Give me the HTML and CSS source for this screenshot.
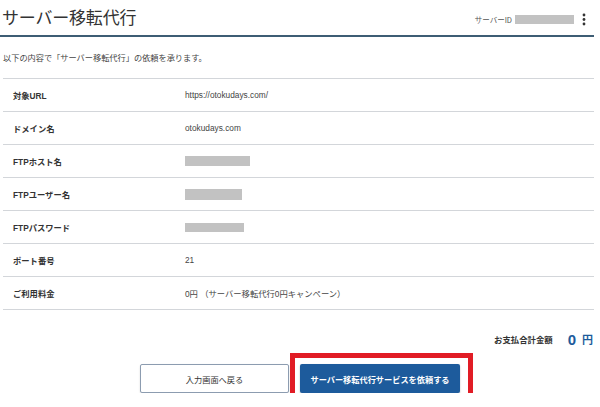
FILE: index.html
```html
<!DOCTYPE html>
<html lang="ja">
<head>
<meta charset="utf-8">
<title>サーバー移転代行</title>
<link rel="stylesheet" href="styles.css">
</head>
<body>
<div class="page">
  <header class="header">
    <h1 class="title">サーバー移転代行</h1>
    <div class="server">
      <span class="server-label">サーバーID</span>
      <span class="mask mask-id"></span>
      <svg class="kebab" width="6" height="14" viewBox="0 0 6 14"><circle cx="3" cy="2" r="1.4"/><circle cx="3" cy="6.5" r="1.4"/><circle cx="3" cy="11" r="1.4"/></svg>
    </div>
  </header>
  <p class="intro">以下の内容で「サーバー移転代行」の依頼を承ります。</p>
  <div class="table">
    <div class="row"><div class="label">対象URL</div><div class="value">https://otokudays.com/</div></div>
    <div class="row"><div class="label">ドメイン名</div><div class="value">otokudays.com</div></div>
    <div class="row"><div class="label">FTPホスト名</div><div class="value"><span class="mask mask-host"></span></div></div>
    <div class="row"><div class="label">FTPユーザー名</div><div class="value"><span class="mask mask-user"></span></div></div>
    <div class="row"><div class="label">FTPパスワード</div><div class="value"><span class="mask mask-pass"></span></div></div>
    <div class="row"><div class="label">ポート番号</div><div class="value">21</div></div>
    <div class="row"><div class="label">ご利用料金</div><div class="value">0円 （サーバー移転代行0円キャンペーン）</div></div>
  </div>
  <div class="total">
    <span class="total-label">お支払合計金額</span>
    <span class="total-num">0</span>
    <span class="total-unit">円</span>
  </div>
  <div class="actions">
    <button class="btn btn-back">入力画面へ戻る</button>
    <div class="primary-wrap">
      <button class="btn btn-primary">サーバー移転代行サービスを依頼する</button>
      <span class="highlight"></span>
    </div>
  </div>
</div>
</body>
</html>
```

FILE: styles.css
```css
* { box-sizing: border-box; }
html, body { margin: 0; padding: 0; background: #fff; }
body {
  font-family: "Liberation Sans", "Noto Sans CJK JP", sans-serif;
  color: #333;
}
.page { width: 594px; }
.header {
  height: 37px;
  border-bottom: 2px solid #3e5d74;
  display: flex;
  align-items: center;
  justify-content: space-between;
}
.title {
  margin: 0 0 0 2px;
  font-family: "Noto Sans CJK JP", sans-serif;
  font-weight: 400;
  font-size: 17px;
  line-height: 20px;
  color: #333;
  letter-spacing: -0.2px;
  position: relative;
  top: -1px;
}
.server {
  display: flex;
  align-items: center;
  margin-top: 4px;
}
.server-label {
  font-family: "Noto Sans CJK JP", sans-serif;
  font-size: 7.5px;
  color: #555;
  margin-right: 3px;
}
.mask { display: inline-block; background: #c2c2c2; vertical-align: middle; }
.mask-id { width: 59px; height: 9px; }
.kebab { fill: #333; margin-left: 7px; margin-right: 7px; }
.intro {
  margin: 0;
  padding: 14px 0 15px 3px;
  font-family: "Noto Sans CJK JP", sans-serif;
  font-size: 8.2px;
  line-height: 12px;
  color: #444;
}
.table { margin-left: 3px; border-top: 1px solid #d3d6da; }
.row {
  display: flex;
  align-items: center;
  height: 33px;
  border-bottom: 1px solid #d3d6da;
  font-size: 8.3px;
}
.label {
  width: 182px;
  padding-left: 10px;
  font-weight: bold;
  color: #333;
}
.value { color: #444; }
.mask-host { width: 65px; height: 10px; }
.mask-user { width: 57px; height: 11px; }
.mask-pass { width: 59px; height: 9px; }
.total {
  margin-top: 20px;
  height: 18px;
  display: flex;
  justify-content: flex-end;
  align-items: center;
}
.total-label {
  font-size: 8.4px;
  font-weight: bold;
  color: #333;
  margin-right: 15px;
}
.total-num {
  font-size: 15px;
  font-weight: bold;
  color: #1d5b9c;
  margin-right: 6px;
}
.total-unit {
  font-size: 11px;
  font-weight: bold;
  color: #1d5b9c;
  margin-right: 1px;
}
.actions {
  margin-top: 16px;
  display: flex;
  justify-content: center;
  gap: 11px;
  padding-left: 6px;
}
.btn {
  height: 29px;
  font-family: "Noto Sans CJK JP", sans-serif;
  font-size: 8.2px;
  padding: 0;
  border-radius: 2px;
}
.btn-back {
  width: 149px;
  background: #fff;
  color: #333;
  border: 1px solid #8c9cb0;
  box-shadow: 0 1px 2px rgba(0,0,0,0.15);
}
.primary-wrap { position: relative; }
.btn-primary {
  width: 160px;
  background: #1d5b9c;
  color: #fff;
  font-weight: bold;
  border: none;
  box-shadow: 0 1px 2px rgba(0,0,0,0.25);
}
.highlight {
  position: absolute;
  left: -10px;
  right: -13px;
  top: -11px;
  bottom: -13px;
  border: 5px solid #e11c25;
}
```
